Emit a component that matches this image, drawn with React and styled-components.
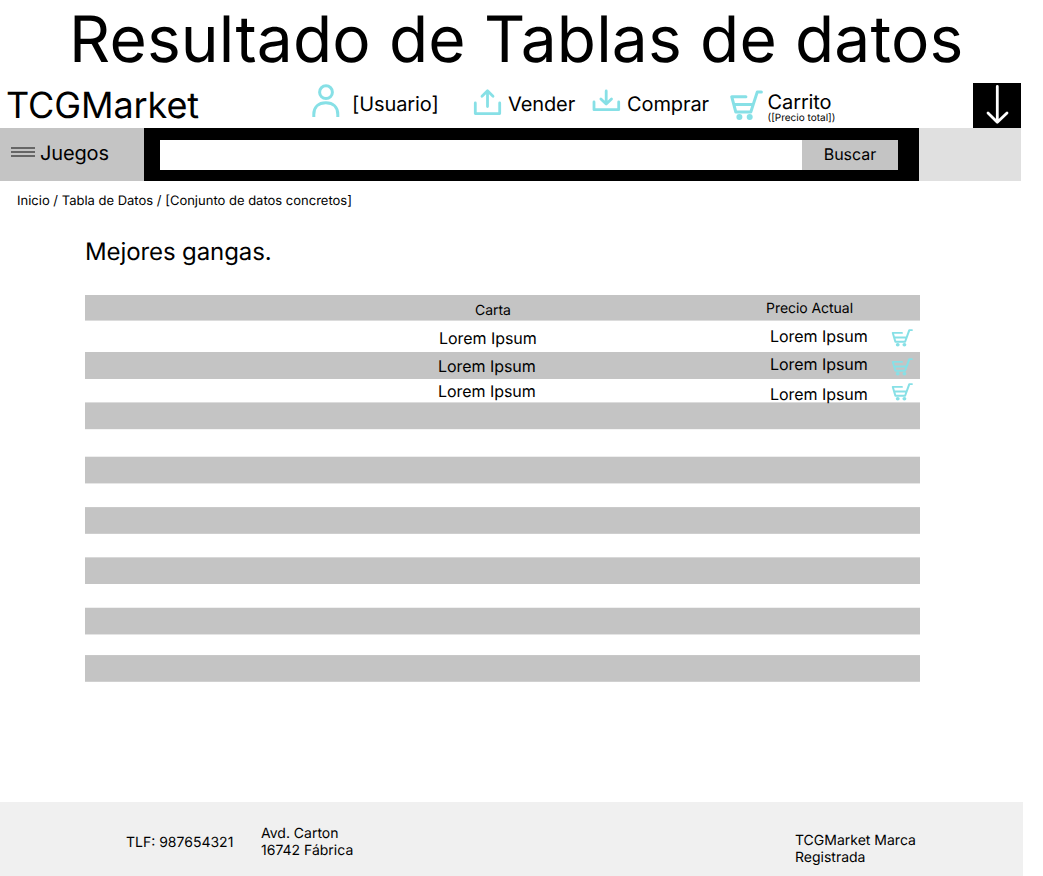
import React from "react";
import styled, { createGlobalStyle } from "styled-components";

const GlobalStyle = createGlobalStyle`
  *, *::before, *::after { box-sizing: border-box; }
  body {
    margin: 0;
    background: #fff;
    color: #000;
    font-family: "Inter", sans-serif;
    font-weight: 400;
    text-rendering: geometricPrecision;
  }
`;

const Page = styled.div`
  width: 1043px;
  height: 876px;
  display: flex;
  flex-direction: column;
  overflow: hidden;
`;

const Title = styled.h1`
  margin: 0;
  padding: 1px 0 0 69px;
  height: 83px;
  font-size: 64px;
  line-height: 77px;
  font-weight: 400;
  letter-spacing: 0.16px;
  white-space: nowrap;
`;

const Header = styled.header`
  display: grid;
  grid-template-columns: 310px 162px 119px 138px 244px 48px;
  height: 45px;
`;

const Brand = styled.div`
  padding-left: 6px;
  font-size: 36px;
  line-height: 44px;
  letter-spacing: -0.1px;
  white-space: nowrap;
`;

const HeaderLink = styled.a`
  display: flex;
  align-items: flex-start;
  color: inherit;
  letter-spacing: -0.1px;
  white-space: nowrap;
`;

const Icon = styled.svg`
  display: block;
  flex: none;
  fill: none;
  stroke: ${(p) => p.$color || "#87e0e6"};
  stroke-width: ${(p) => p.$weight || 2.8};
  stroke-linecap: round;
  stroke-linejoin: round;
`;

const LinkText = styled.span`
  padding-top: 9px;
  font-size: 20px;
  line-height: 24px;
`;

const CartIcon = styled.div`
  padding-top: 7px;
`;

const CartText = styled.div`
  display: grid;
  grid-template-rows: 22px 12px;
  padding: 7px 0 0 4.5px;
  font-size: 20px;
  line-height: 24px;
`;

const Total = styled.small`
  font-size: 10px;
  line-height: 12px;
  letter-spacing: 0;
`;

const Download = styled.button`
  border: 0;
  padding: 0;
  background: #000;
`;

const Nav = styled.nav`
  display: flex;
  width: 1021px;
  height: 53px;
  flex: none;
  background: #e0e0e0;
`;

const Games = styled.div`
  display: flex;
  width: 144px;
  padding: 13px 0 0 11px;
  background: #c4c4c4;
  font-size: 20px;
  line-height: 24px;
  letter-spacing: -0.15px;
`;

const Burger = styled.span`
  display: flex;
  flex-direction: column;
  justify-content: space-between;
  width: 24px;
  height: 10px;
  margin: 6px 5px 0 0;

  i {
    height: 2px;
    background: #666;
  }
`;

const Search = styled.form`
  display: flex;
  width: 775px;
  padding: 12px 21px 11px 16px;
  background: #000;
`;

const Field = styled.input`
  flex: 1;
  min-width: 0;
  border: 0;
  padding: 0 8px;
  background: #fff;
  font: inherit;
`;

const Submit = styled.button`
  width: 96px;
  border: 0;
  padding: 0 0 1px;
  background: #c4c4c4;
  color: #000;
  font: 400 16px/19px "Inter", sans-serif;
  text-rendering: inherit;
`;

const Breadcrumb = styled.div`
  padding: 12px 0 0 17px;
  height: 56px;
  font-size: 13px;
  line-height: 16px;
  white-space: nowrap;
`;

const Heading = styled.h2`
  margin: 0;
  padding-left: 85px;
  height: 58px;
  font-size: 24px;
  line-height: 29px;
  font-weight: 400;
  letter-spacing: -0.1px;
`;

const Table = styled.section`
  width: 835px;
  margin-left: 85px;
  flex: 1;
`;

const Row = styled.div`
  display: grid;
  grid-template-columns: 353px 328px 125px 29px;
  height: ${(p) => p.$height}px;
  background: ${(p) => (p.$shaded ? "#c4c4c4" : "transparent")};
`;

const HeadRow = styled(Row)`
  box-shadow: inset 0 -1px #dcdcdc;
`;

const Band = styled.div`
  height: ${(p) => p.$height}px;
  margin-bottom: ${(p) => p.$gap}px;
  border: solid;
  border-width: 1px 0;
  border-color: ${(p) => p.$top} transparent ${(p) => p.$bottom};
  background: #c4c4c4;
`;

const Cell = styled.span`
  grid-column: ${(p) => p.$col};
  grid-row: 1;
  padding-top: ${(p) => p.$top}px;
  padding-left: ${(p) => p.$indent || 0}px;
  font-size: ${(p) => p.$size || 16}px;
  line-height: 19px;
  letter-spacing: -0.05px;
  white-space: nowrap;
`;

const Footer = styled.footer`
  display: grid;
  grid-template-columns: 135px 534px 1fr;
  width: 1023px;
  height: 74px;
  padding-left: 126px;
  background: #f0f0f0;
  font-size: 14px;
  line-height: 17px;
`;

const FooterText = styled.div`
  padding-top: ${(p) => p.$top}px;
`;

const Cart = ({ width, height, weight }) => (
  <Icon
    width={width}
    height={height}
    viewBox="0 0 34 31"
    preserveAspectRatio="none"
    $weight={weight}
  >
    <path d="M16.9 6.7H2.7L6.8 22H21.8L28.3 1.9H32.4M5 14.6H23.8" />
    <circle cx="10.4" cy="27.1" r="3" fill="#87e0e6" stroke="none" />
    <circle cx="20.7" cy="27.1" r="3" fill="#87e0e6" stroke="none" />
  </Icon>
);

const rows = [
  { height: 31, name: [8, 1], price: 6, cart: 8 },
  { height: 27, shaded: true, name: [5, 0], price: 3, cart: 6 },
  { height: 23, name: [3, 0], price: 6, cart: 4 },
];

const bands = [
  { height: 28, gap: 26, top: "#dcdcdc", bottom: "#f4f4f4" },
  { height: 28, gap: 23, top: "#eeeeee", bottom: "#e6e6e6" },
  { height: 27, gap: 23, top: "#cacaca", bottom: "#cecece" },
  { height: 27, gap: 23, top: "#d8d8d8", bottom: "#c4c4c4" },
  { height: 28, gap: 20, top: "#f0f0f0", bottom: "#e4e4e4" },
  { height: 27, gap: 0, top: "#c8c8c8", bottom: "#d0d0d0" },
];

export default function App() {
  return (
    <Page>
      <GlobalStyle />
      <Title>Resultado de Tablas de datos</Title>
      <Header>
        <Brand>TCGMarket</Brand>
        <HeaderLink>
          <Icon width="42" height="45" viewBox="310 83 42 45" $weight="3">
            <circle cx="326" cy="92.2" r="6.4" />
            <path
              strokeLinecap="butt"
              d="M313.8 117v-2.5c0-7.5 4.8-11.7 12-11.7s12 4.2 12 11.7v2.5"
            />
          </Icon>
          <LinkText>[Usuario]</LinkText>
        </HeaderLink>
        <HeaderLink>
          <Icon width="36" height="45" viewBox="472 83 36 45">
            <path d="M475.3 103v10.6h24.4V103M487.5 106.5V91M482 96.2l5.5-5.4 5.5 5.4" />
          </Icon>
          <LinkText>Vender</LinkText>
        </HeaderLink>
        <HeaderLink>
          <Icon width="36" height="45" viewBox="591 83 36 45">
            <path d="M594 102v7.7h24.7V102M606.2 91v12.8M600.9 98.9l5.3 5.1 5.3-5.1" />
          </Icon>
          <LinkText>Comprar</LinkText>
        </HeaderLink>
        <HeaderLink>
          <CartIcon>
            <Cart width={34} height={31} weight={3} />
          </CartIcon>
          <CartText>
            <span>Carrito</span>
            <Total>([Precio total])</Total>
          </CartText>
        </HeaderLink>
        <Download aria-label="Descargar">
          <Icon width="48" height="45" viewBox="973 83 48 45" $color="#fff">
            <path d="M997.3 86.5V122M988 113l9.3 9.3 9.7-9.3" />
          </Icon>
        </Download>
      </Header>
      <Nav>
        <Games>
          <Burger>
            <i />
            <i />
            <i />
          </Burger>
          Juegos
        </Games>
        <Search>
          <Field aria-label="Buscar" />
          <Submit type="button">Buscar</Submit>
        </Search>
      </Nav>
      <Breadcrumb>Inicio / Tabla de Datos / [Conjunto de datos concretos]</Breadcrumb>
      <Heading>Mejores gangas.</Heading>
      <Table>
        <HeadRow $height={26} $shaded>
          <Cell $col={2} $top={6} $indent={37} $size={14}>Carta</Cell>
          <Cell $col={3} $top={4} $size={14}>Precio Actual</Cell>
        </HeadRow>
        {rows.map((row, i) => (
          <Row key={i} $height={row.height} $shaded={row.shaded}>
            <Cell $col={2} $top={row.name[0]} $indent={row.name[1]}>Lorem Ipsum</Cell>
            <Cell $col={3} $top={row.price} $indent={4}>Lorem Ipsum</Cell>
            <Cell $col={4} $top={row.cart}>
              <Cart width={22} height={18} weight={3.1} />
            </Cell>
          </Row>
        ))}
        {bands.map((band, i) => (
          <Band
            key={i}
            $height={band.height}
            $gap={band.gap}
            $top={band.top}
            $bottom={band.bottom}
          />
        ))}
      </Table>
      <Footer>
        <FooterText $top={32}>TLF: 987654321</FooterText>
        <FooterText $top={23}>
          Avd. Carton
          <br />
          16742 Fábrica
        </FooterText>
        <FooterText $top={30}>
          TCGMarket Marca
          <br />
          Registrada
        </FooterText>
      </Footer>
    </Page>
  );
}
